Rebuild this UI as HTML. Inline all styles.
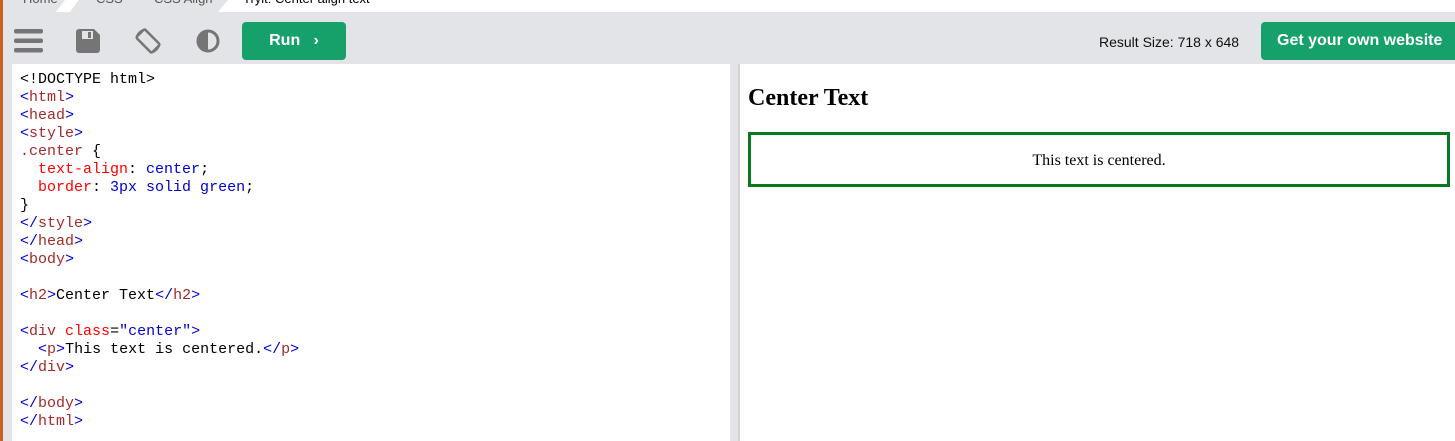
<!DOCTYPE html>
<html><head><style>
body{margin:0;width:1455px;height:441px;overflow:hidden;background:#e3e4e8;position:relative;font-family:"Liberation Sans",sans-serif}
.abs{position:absolute}
.code{left:12px;top:64px;width:718px;height:377px;background:#fff;font-family:"Liberation Mono",monospace;font-size:15px;line-height:18px;padding:7px 0 0 8px;box-sizing:border-box;white-space:pre;color:#000}
.t{color:#0000cd}.n{color:#a52a2a}.a{color:#ff0000}.v{color:#0000cd}
.res{left:740px;top:64px;width:715px;height:377px;background:#fff}
.btn{background:#16a06a;color:#fff;font-weight:bold;border-radius:4px;display:flex;align-items:center;justify-content:center}
</style></head><body>
<div class="abs" style="left:0;top:0;width:1455px;height:12px;background:#fff"></div>
<div class="abs" style="left:3px;top:0;width:62px;height:12px;background:#e3e4e8;clip-path:polygon(0 0,100% 0,85% 100%,0 100%)"></div>
<div class="abs" style="left:70px;top:0;width:72px;height:12px;background:#e3e4e8;clip-path:polygon(12% 0,100% 0,88% 100%,0 100%)"></div>
<div class="abs" style="left:128px;top:0;width:100px;height:12px;background:#e3e4e8;clip-path:polygon(12% 0,100% 0,90% 100%,0 100%)"></div>
<div class="abs" style="left:23px;top:-9px;font-size:13px;color:#555">Home</div>
<div class="abs" style="left:96px;top:-9px;font-size:13px;color:#555">CSS</div>
<div class="abs" style="left:154px;top:-9px;font-size:13px;color:#555">CSS Align</div>
<div class="abs" style="left:243px;top:-9px;font-size:13px;color:#000">Tryit: Center align text</div>
<div class="abs" style="left:0;top:0;width:3px;height:441px;background:#c8621e"></div>
<div class="abs" style="left:3px;top:12px;width:9px;height:429px;background:#e3e4e8"></div>
<svg class="abs" style="left:14px;top:29px" width="29" height="24"><rect y="0" width="29" height="4.5" rx="2" fill="#757575"/><rect y="9.5" width="29" height="4.5" rx="2" fill="#757575"/><rect y="19" width="29" height="4.5" rx="2" fill="#757575"/></svg>
<svg class="abs" style="left:76px;top:29px" width="24" height="24"><path d="M3 0h15l6 6v15a3 3 0 0 1-3 3H3a3 3 0 0 1-3-3V3a3 3 0 0 1 3-3z" fill="#757575"/><rect x="6" y="2" width="11" height="8" fill="#e3e4e8"/><rect x="12" y="3" width="3" height="6" fill="#757575"/></svg>
<svg class="abs" style="left:133px;top:26px" width="30" height="30" viewBox="0 0 30 30"><rect x="9" y="4" width="12" height="22" rx="2" transform="rotate(-45 15 15)" fill="none" stroke="#757575" stroke-width="2.5"/><path d="M3 12A12 12 0 0 1 13 3M27 18A12 12 0 0 1 17 27" fill="none" stroke="#757575" stroke-width="1.5"/></svg>
<svg class="abs" style="left:196px;top:29px" width="24" height="24"><circle cx="12" cy="12" r="10" fill="none" stroke="#757575" stroke-width="3"/><path d="M12 2a10 10 0 0 0 0 20z" fill="#757575"/></svg>
<div class="abs btn" style="left:242px;top:22px;width:104px;height:38px;font-size:16px">Run&nbsp;&nbsp;&nbsp;›</div>
<div class="abs" style="left:1099px;top:34px;font-size:14px;color:#111">Result Size: 718 x 648</div>
<div class="abs btn" style="left:1261px;top:22px;width:200px;height:38px;font-size:16px;justify-content:flex-start;padding-left:16px;box-sizing:border-box">Get your own website</div>
<div class="abs code">&lt;!DOCTYPE html&gt;
<span class="t">&lt;</span><span class="n">html</span><span class="t">&gt;</span>
<span class="t">&lt;</span><span class="n">head</span><span class="t">&gt;</span>
<span class="t">&lt;</span><span class="n">style</span><span class="t">&gt;</span>
<span class="n">.center</span> {
  <span class="a">text-align</span>: <span class="v">center</span>;
  <span class="a">border</span>: <span class="v">3px solid green</span>;
}
<span class="t">&lt;/</span><span class="n">style</span><span class="t">&gt;</span>
<span class="t">&lt;/</span><span class="n">head</span><span class="t">&gt;</span>
<span class="t">&lt;</span><span class="n">body</span><span class="t">&gt;</span>

<span class="t">&lt;</span><span class="n">h2</span><span class="t">&gt;</span>Center Text<span class="t">&lt;/</span><span class="n">h2</span><span class="t">&gt;</span>

<span class="t">&lt;</span><span class="n">div</span> <span class="a">class</span>=<span class="v">"center"</span><span class="t">&gt;</span>
  <span class="t">&lt;</span><span class="n">p</span><span class="t">&gt;</span>This text is centered.<span class="t">&lt;/</span><span class="n">p</span><span class="t">&gt;</span>
<span class="t">&lt;/</span><span class="n">div</span><span class="t">&gt;</span>

<span class="t">&lt;/</span><span class="n">body</span><span class="t">&gt;</span>
<span class="t">&lt;/</span><span class="n">html</span><span class="t">&gt;</span></div>
<div class="abs" style="left:738px;top:64px;width:2px;height:377px;background:#d3d3d3"></div>
<div class="abs res">
<div class="abs" style="left:8px;top:21px;font-family:'Liberation Serif',serif;font-weight:bold;font-size:24px;color:#000">Center Text</div>
<div class="abs" style="left:8px;top:68px;width:702px;height:55px;border:3px solid #077a1e;box-sizing:border-box;font-family:'Liberation Serif',serif;font-size:16px;text-align:center;line-height:51px;color:#000">This text is centered.</div>
</div>
</body></html>
